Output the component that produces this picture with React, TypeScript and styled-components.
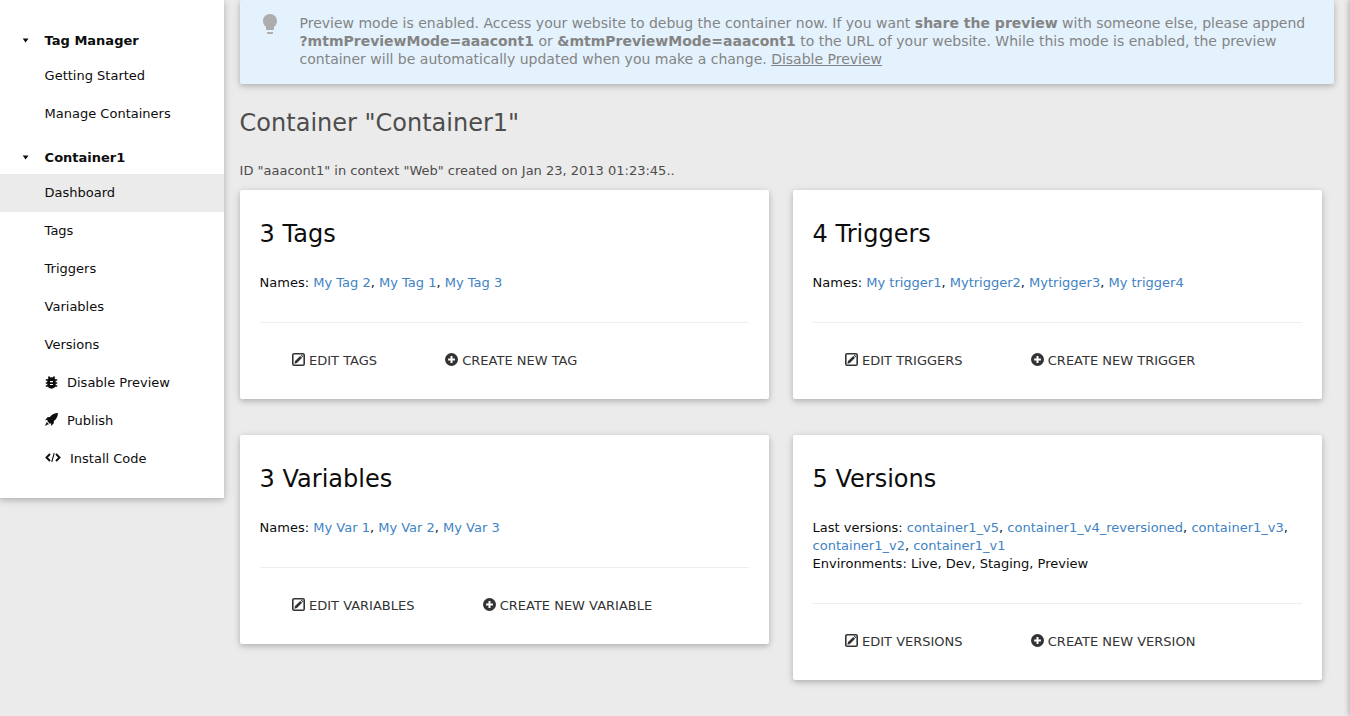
import React from "react";
import styled, { createGlobalStyle } from "styled-components";

const raised = "0 2px 5px 0 rgba(0,0,0,.16), 0 2px 10px 0 rgba(0,0,0,.12)";

const GlobalStyle = createGlobalStyle`
  * { box-sizing: border-box; }
  body {
    margin: 0;
    background: #ebebeb;
    color: #0d0d0d;
    font: 13px/18px "DejaVu Sans", sans-serif;
    overflow: hidden;
  }
`;

const Page = styled.div`
  display: flex;
  align-items: flex-start;
  height: 716px;
`;

const Sidebar = styled.nav`
  width: 224px;
  flex: none;
  padding: 16px 0 20px;
  background: #fff;
  box-shadow: ${raised};
`;

const MenuHeading = styled.div`
  display: flex;
  align-items: center;
  height: 34px;
  margin-top: 7px;
  padding: 2px 0 0 22px;
  font-weight: bold;
`;

const Arrow = styled.svg`
  width: 7px;
  height: 5px;
  margin: 0 15.6px 2px 0;
`;

const MenuItem = styled.a<{ $active?: boolean }>`
  display: flex;
  align-items: center;
  height: 38px;
  padding: 0 0 1px 44.6px;
  background: ${(p) => (p.$active ? "#ebebeb" : "transparent")};
`;

const MenuIcon = styled.svg<{ $wide?: boolean; $lift?: number }>`
  width: ${(p) => (p.$wide ? 16 : 13)}px;
  height: 13px;
  margin: 0 9.4px ${(p) => p.$lift ?? 2}px 0;
  flex: none;
`;

const Main = styled.main`
  flex: none;
  width: 1094px;
  margin-left: 16px;
`;

const Notice = styled.div`
  display: flex;
  height: 84px;
  padding: 14px 20px 16px 18px;
  border-radius: 2px;
  background: #e3f2fd;
  color: #848484;
  font-size: 14px;
  box-shadow: ${raised};
  white-space: nowrap;
`;

const Bulb = styled.svg`
  width: 24px;
  height: 24px;
  margin: -2px 17.5px 0 0;
  flex: none;
  fill: #adadad;
`;

const NoticeLink = styled.a`
  text-decoration: underline;
`;

const PageTitle = styled.h1`
  margin: 23px 0 0 -0.4px;
  font-size: 24px;
  line-height: 32px;
  font-weight: normal;
  color: #4d4d4d;
`;

const Summary = styled.p`
  margin: 23px 0 10px -0.4px;
  color: #4d4d4d;
`;

const Cards = styled.div`
  display: grid;
  grid-template-columns: 529px 529px;
  column-gap: 24px;
  row-gap: 36px;
  align-items: start;
`;

const Card = styled.section`
  padding: 28px 20px 29px;
  background: #fff;
  border-radius: 2px;
  box-shadow: ${raised};
`;

const CardTitle = styled.h2`
  margin: 0 0 24px -0.4px;
  font-size: 24px;
  line-height: 32px;
  font-weight: normal;
`;

const CardText = styled.div`
  margin-left: -0.4px;
`;

const CardLink = styled.a`
  color: #4183c4;
`;

const Actions = styled.div`
  display: flex;
  margin-top: 30px;
  padding: 29px 0 0 32px;
  border-top: 1px solid #eee;
`;

const Action = styled.a`
  display: flex;
  align-items: center;
  margin-right: 68.2px;
  color: #333;
  text-transform: uppercase;
`;

const ActionIcon = styled.svg`
  width: 13px;
  height: 13px;
  margin: 0 4px 3px 0;
`;

const EditIcon = () => (
  <ActionIcon viewBox="0 0 13 13">
    <rect x="0.8" y="0.8" width="11.4" height="11.4" rx="1.3" fill="none" stroke="#333" strokeWidth="1.6" />
    <path d="M2.4 10.7 3 8 8.2 2.900 10.100 4.800 5 10ZM8.800 2.300 9.500 1.600 11.400 3.500 10.700 4.200Z" fill="#333" />
  </ActionIcon>
);

const PlusIcon = () => (
  <ActionIcon viewBox="0 0 13 13">
    <circle cx="6.5" cy="6.5" r="6.5" fill="#333" />
    <path d="M6.5 3.1v6.8M3.1 6.5h6.8" stroke="#fff" strokeWidth="2" />
  </ActionIcon>
);

const BugIcon = () => (
  <MenuIcon $lift={1} viewBox="0 0 13 13">
    <path d="M3.4 0.6 5 2.2M9.600 0.600 8 2.200M0.800 4h11.400M0.800 7h11.400M0.800 10h11.400" stroke="#0d0d0d" strokeWidth="1.6" />
    <path d="M6.500 1.300c2.800 0 4.200 1.500 4.200 3.700v3.800c0 2.200-1.800 3.900-4.200 3.900s-4.200-1.700-4.200-3.900V5c0-2.200 1.400-3.700 4.200-3.700Z" fill="#0d0d0d" />
    <path d="M5 5.600h3M5 8.500h3" stroke="#fff" strokeWidth="1.2" />
  </MenuIcon>
);

const RocketIcon = () => (
  <MenuIcon viewBox="0 0 13 13" fill="#0d0d0d">
    <path d="M13 0C9.5.2 7 1.4 4.9 4.1L2.4 4.3.1 7.2l2.7-.4-.6 1.3 2.7 2.7 1.3-.6-.4 2.7 2.900-2.300.2-2.500C11.600 6 12.800 3.500 13 0Z" />
    <path d="M1.700 8.900 4.100 11.300 2.700 11.600 0 13 1.200 10.300Z" />
  </MenuIcon>
);

const CodeIcon = () => (
  <MenuIcon $wide viewBox="0 0 16 13" fill="none" stroke="#0d0d0d">
    <path d="M5 3 1.500 6.500 5 10M11 3l3.500 3.500L11 10" strokeWidth="1.900" />
    <path d="M9.200 2.200 6.800 10.800" strokeWidth="1.100" />
  </MenuIcon>
);

const Heading = ({ children }: { children: React.ReactNode }) => (
  <MenuHeading>
    <Arrow viewBox="0 0 7 5"><path d="M.7.5h5.800L3.600 4.600Z" fill="#0d0d0d" /></Arrow>
    {children}
  </MenuHeading>
);

const Links = ({ names }: { names: string[] }) => (
  <>
    {names.map((name, i) => (
      <React.Fragment key={name}>
        {i > 0 && ", "}
        <CardLink>{name}</CardLink>
      </React.Fragment>
    ))}
  </>
);

type EntityCardProps = {
  title: string;
  label: string;
  names: string[];
  environments?: string;
  edit: string;
  create: string;
};

const EntityCard = ({ title, label, names, environments, edit, create }: EntityCardProps) => (
  <Card>
    <CardTitle>{title}</CardTitle>
    <CardText>{label}: <Links names={names} /></CardText>
    {environments && <CardText>Environments: {environments}</CardText>}
    <Actions>
      <Action><EditIcon />{edit}</Action>
      <Action><PlusIcon />{create}</Action>
    </Actions>
  </Card>
);

const PageEdge = styled.div`
  position: absolute;
  top: 0;
  left: 1350px;
  width: 20px;
  height: 716px;
  box-shadow: 0 0 6px 0 rgba(0,0,0,.35);
`;

export default function App() {
  return (
    <Page>
      <GlobalStyle />
      <Sidebar>
        <Heading>Tag Manager</Heading>
        <MenuItem>Getting Started</MenuItem>
        <MenuItem>Manage Containers</MenuItem>
        <Heading>Container1</Heading>
        <MenuItem $active>Dashboard</MenuItem>
        <MenuItem>Tags</MenuItem>
        <MenuItem>Triggers</MenuItem>
        <MenuItem>Variables</MenuItem>
        <MenuItem>Versions</MenuItem>
        <MenuItem><BugIcon />Disable Preview</MenuItem>
        <MenuItem><RocketIcon />Publish</MenuItem>
        <MenuItem><CodeIcon />Install Code</MenuItem>
      </Sidebar>
      <Main>
        <Notice>
          <Bulb viewBox="0 0 24 24">
            <path d="M9 21c0 .55.45 1 1 1h4c.55 0 1-.45 1-1v-1H9v1zm3-19C8.140 2 5 5.140 5 9c0 2.380 1.190 4.470 3 5.740V17c0 .55.45 1 1 1h6c.55 0 1-.45 1-1v-2.260c1.810-1.270 3-3.360 3-5.740 0-3.860-3.140-7-7-7z" />
          </Bulb>
          <div>
            Preview mode is enabled. Access your website to debug the container now. If you want <b>share the preview</b> with someone else, please append<br />
            <b>?mtmPreviewMode=aaacont1</b> or <b>&amp;mtmPreviewMode=aaacont1</b> to the URL of your website. While this mode is enabled, the preview<br />
            container will be automatically updated when you make a change. <NoticeLink>Disable Preview</NoticeLink>
          </div>
        </Notice>
        <PageTitle>Container "Container1"</PageTitle>
        <Summary>ID "aaacont1" in context "Web" created on Jan 23, 2013 01:23:45..</Summary>
        <Cards>
          <EntityCard title="3 Tags" label="Names" names={["My Tag 2", "My Tag 1", "My Tag 3"]} edit="Edit Tags" create="Create new tag" />
          <EntityCard title="4 Triggers" label="Names" names={["My trigger1", "Mytrigger2", "Mytrigger3", "My trigger4"]} edit="Edit Triggers" create="Create new trigger" />
          <EntityCard title="3 Variables" label="Names" names={["My Var 1", "My Var 2", "My Var 3"]} edit="Edit Variables" create="Create new variable" />
          <EntityCard
            title="5 Versions"
            label="Last versions"
            names={["container1_v5", "container1_v4_reversioned", "container1_v3", "container1_v2", "container1_v1"]}
            environments="Live, Dev, Staging, Preview"
            edit="Edit Versions"
            create="Create new version"
          />
        </Cards>
      </Main>
      <PageEdge />
    </Page>
  );
}
